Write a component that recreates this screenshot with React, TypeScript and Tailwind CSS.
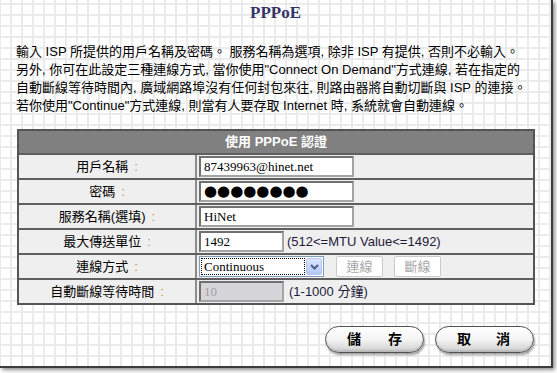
import React from 'react';

const cjk = "font-['Liberation_Sans','Noto_Sans_CJK_TC',sans-serif]";
const serif = "font-['Liberation_Serif','Noto_Sans_CJK_TC',serif]";

function Row({ label, children }: { label: string; children: React.ReactNode }) {
  return (
    <div className="flex h-[25px] border-t-2 border-[#5f5f5f]">
      <div className="w-[178px] shrink-0 border-r-2 border-[#8c8c8c] bg-[#efefef] flex items-center justify-center text-[13px] text-black">
        {label}
        <span className="ml-[6px] text-[#b8974a]">:</span>
      </div>
      <div className="flex-1 bg-[#efefef] flex items-center pl-[2px]">{children}</div>
    </div>
  );
}

function Field({ width, children, disabled }: { width: string; children: React.ReactNode; disabled?: boolean }) {
  return (
    <div
      className={
        width +
        ' h-[21px] border-2 border-[#a4a4a4] border-t-[#707070] border-l-[#707070] flex items-center pl-[3px] overflow-hidden ' +
        (disabled ? 'bg-[#d6d6da] text-[#a0a0a0]' : 'bg-white text-black')
      }
    >
      {children}
    </div>
  );
}

function PillButton({ a, b, pad }: { a: string; b: string; pad: string }) {
  return (
    <div
      className={
        'w-[99px] h-[27px] rounded-full border-[1.5px] border-[#505050] bg-gradient-to-b from-white via-[#f4f4f4] to-[#cfcfcf] shadow-[1px_2px_2px_rgba(0,0,0,0.35),inset_0_-2px_2px_rgba(0,0,0,0.12)] flex items-center justify-between text-[14px] font-bold text-black ' +
        pad
      }
    >
      <span>{a}</span>
      <span>{b}</span>
    </div>
  );
}

export default function App() {
  return (
    <div className={'w-[557px] h-[373px] bg-white ' + cjk}>
      <div className="w-[553px] h-[368px] border-r-2 border-b-2 border-[#3c3c3c] shadow-[2px_2px_4px_rgba(0,0,0,0.45)] bg-white bg-[linear-gradient(to_right,#ebebeb_2px,transparent_2px),linear-gradient(to_bottom,#ebebeb_2px,transparent_2px)] bg-size-[11px_11px] bg-position-[10px_3px] overflow-hidden">
        <div className={'pt-[3px] h-[23px] leading-[20px] text-center text-[17px] font-bold text-[#333366] ' + serif}>PPPoE</div>

        <div className="mt-[20px] pl-[16px] text-[13px] leading-[18px] text-black whitespace-nowrap">
          <div>輸入 ISP 所提供的用戶名稱及密碼。 服務名稱為選項, 除非 ISP 有提供, 否則不必輸入。</div>
          <div>另外, 你可在此設定三種連線方式, 當你使用"Connect On Demand"方式連線, 若在指定的</div>
          <div>自動斷線等待時間內, 廣域網路埠沒有任何封包來往, 則路由器將自動切斷與 ISP 的連接。</div>
          <div>若你使用"Continue"方式連線, 則當有人要存取 Internet 時, 系統就會自動連線。</div>
        </div>

        <div className="mt-[14px] ml-[17px] w-[518px] border-2 border-[#555555]">
          <div className="h-[22px] bg-[#808080] flex items-center justify-center text-white text-[13px] font-bold">
            使用 PPPoE 認證
          </div>

          <Row label="用戶名稱">
            <Field width="w-[155px]">
              <span className={'text-[13px] ' + serif}>87439963@hinet.net</span>
            </Field>
          </Row>

          <Row label="密碼">
            <Field width="w-[155px]">
              <span className="text-[15px] leading-none tracking-[0px] font-['DejaVu_Sans',sans-serif]">●●●●●●●●</span>
            </Field>
          </Row>

          <Row label="服務名稱(選填)">
            <Field width="w-[155px]">
              <span className={'text-[13px] ' + serif}>HiNet</span>
            </Field>
          </Row>

          <Row label="最大傳送單位">
            <Field width="w-[85px]">
              <span className={'text-[13px] ' + serif}>1492</span>
            </Field>
            <span className="ml-[3px] text-[13px] text-[#1e1a3a]">(512&lt;=MTU Value&lt;=1492)</span>
          </Row>

          <Row label="連線方式">
            <div className="w-[125px] h-[21px] border border-[#7f9db9] bg-white flex p-[1px]">
              <div className={'flex-1 border border-dotted border-black flex items-center pl-[2px] text-[13px] text-black ' + serif}>
                Continuous
              </div>
              <div className="w-[16px] ml-[1px] rounded-[2px] border border-[#b5c7ef] bg-gradient-to-b from-[#dbe6fd] to-[#b3c8f7] flex items-center justify-center">
                <svg width="9" height="6" viewBox="0 0 9 6">
                  <path d="M1 1 L4.5 4.5 L8 1" fill="none" stroke="#4d6185" strokeWidth="2" />
                </svg>
              </div>
            </div>
            <div className="ml-[12px] w-[47px] h-[21px] border border-[#cacaca] rounded-[2px] bg-white flex items-center justify-center text-[13px] text-[#a8a8a8]">
              連線
            </div>
            <div className="ml-[11px] w-[47px] h-[21px] border border-[#cacaca] rounded-[2px] bg-white flex items-center justify-center text-[13px] text-[#a8a8a8]">
              斷線
            </div>
          </Row>

          <Row label="自動斷線等待時間">
            <Field width="w-[85px]" disabled>
              <span className={'text-[13px] ' + serif}>10</span>
            </Field>
            <span className="ml-[5px] text-[13px] text-[#1e1a3a]">(1-1000 分鐘)</span>
          </Row>
        </div>

        <div className="mt-[21px] pr-[17px] flex justify-end gap-[11px]">
          <PillButton a="儲" b="存" pad="pl-[21px] pr-[21px]" />
          <PillButton a="取" b="消" pad="pl-[21px] pr-[23px]" />
        </div>
      </div>
    </div>
  );
}
